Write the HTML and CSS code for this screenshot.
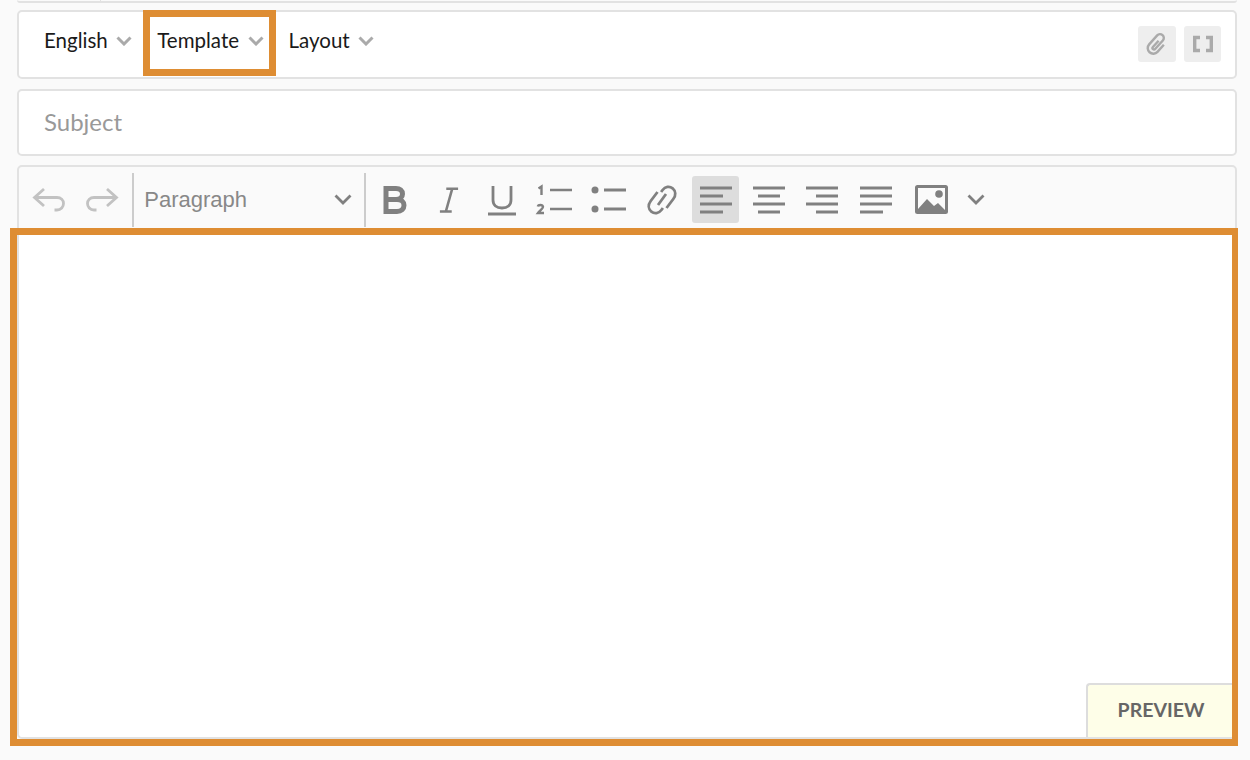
FILE: index.html
```html
<!DOCTYPE html>
<html lang="en">
<head>
<meta charset="utf-8">
<title>Email composer</title>
<link rel="stylesheet" href="styles.css">
</head>
<body>
<main class="composer">
  <div class="stub"><span class="stub-tab"></span></div>

  <section class="panel topbar">
    <div class="menu">
      <div class="menu-item"><span>English</span><svg class="chev" viewBox="0 0 16 10"><path d="M1.500 1.500 8 8l6.500-6.500"/></svg></div>
      <div class="menu-item"><span>Template</span><svg class="chev" viewBox="0 0 16 10"><path d="M1.500 1.500 8 8l6.500-6.500"/></svg><div class="mark mark-template"></div></div>
      <div class="menu-item"><span>Layout</span><svg class="chev" viewBox="0 0 16 10"><path d="M1.500 1.500 8 8l6.500-6.500"/></svg></div>
    </div>
    <div class="top-actions">
      <button class="square attach"><svg viewBox="0 0 24 24"><path transform="rotate(42 12 12)" d="M11 8.500v8.500a1.500 1.500 0 0 0 3 0V5.500a3.800 3.800 0 0 0-7.600 0v12a5.600 5.600 0 0 0 11.200 0V8"/></svg></button>
      <button class="square full"><svg viewBox="0 0 24 24"><path d="M9 5.500H3.700v13H9M15 5.500h5.300v13H15"/></svg></button>
    </div>
  </section>

  <section class="panel subject">Subject</section>

  <section class="panel editor">
    <div class="toolbar">
      <button class="tool muted"><svg viewBox="0 0 32 24"><path d="M11 1 1.500 9.500 11 18M1.500 9.500H24c4 0 6.500 2.600 6.500 6s-2.500 6.500-6.500 6.500h-2.500"/></svg></button>
      <button class="tool muted"><svg viewBox="0 0 32 24"><path d="M21 1l9.500 8.500L21 18M30.500 9.500H8c-4 0-6.500 2.600-6.500 6S4 22 8 22h2.500"/></svg></button>
      <div class="select"><span>Paragraph</span><svg class="chev-dark" viewBox="0 0 18 11"><path d="M1.500 1.500 9 9l7.500-7.500"/></svg></div>
      <button class="tool"><svg viewBox="0 0 24 28"><path class="thick" d="M3 2.500h10c4 0 6.500 2 6.500 5.500S17 13.500 13 13.500H3zM3 13.500h11c4.500 0 7 2.300 7 5.800S18.500 25.500 14 25.500H3z"/></svg></button>
      <button class="tool"><svg viewBox="0 0 22 28"><path d="M8 2h13M1 27h13M14.500 2 7.500 27"/></svg></button>
      <button class="tool"><svg viewBox="0 0 28 30"><path d="M5 1v14c0 5 3.500 8 9 8s9-3 9-8V1M0 29h28"/></svg></button>
      <button class="tool"><svg viewBox="0 0 36 30"><path class="num" d="M1.500 3.500 4.500 1.500V10M13 5h22M13 24h22"/><path class="num" d="M.8 21.500c.5-2 4.800-2.300 5.200.3.200 1.500-3.200 3.800-5 6.200h6"/></svg></button>
      <button class="tool"><svg viewBox="0 0 36 30"><circle class="solid" cx="4" cy="5" r="3.500"/><circle class="solid" cx="4" cy="24" r="3.500"/><path d="M13 5h22M13 24h22"/></svg></button>
      <button class="tool"><svg viewBox="0 0 30 32"><path d="M10.500 8 3.700 17c-2.800 3.700-2.500 8 .7 10.700 3.100 2.500 7.400 1.800 10-1.700l1.500-2M19.500 24l6.800-9c2.800-3.700 2.500-8-.7-10.700-3.100-2.500-7.400-1.800-10 1.700l-1.500 2M11 21l8-11"/></svg></button>
      <button class="tool active"><svg viewBox="0 0 32 27"><path d="M0 2h32M0 10h23M0 18h32M0 26h23"/></svg></button>
      <button class="tool"><svg viewBox="0 0 32 27"><path d="M0 2h32M5 10h22M0 18h32M5 26h22"/></svg></button>
      <button class="tool"><svg viewBox="0 0 32 27"><path d="M0 2h32M10 10h22M0 18h32M10 26h22"/></svg></button>
      <button class="tool"><svg viewBox="0 0 32 27"><path d="M0 2h32M0 10h32M0 18h32M0 26h23"/></svg></button>
      <button class="tool image"><svg viewBox="0 0 33 29"><rect class="frame" x="1.500" y="1.500" width="30" height="26" rx="1"/><circle class="solid" cx="24" cy="9" r="3.800"/><path class="solid" d="M3 27v-3l9-10 7 7 4-3 7 7v2z"/></svg></button>
      <button class="tool narrow"><svg class="chev-dark" viewBox="0 0 18 11"><path d="M1.500 1.500 9 9l7.500-7.500"/></svg></button>
    </div>
    <div class="canvas">
      <div class="preview">PREVIEW</div>
    </div>
    <div class="mark mark-editor"></div>
  </section>
</main>
</body>
</html>
```

FILE: styles.css
```css
* { box-sizing: border-box; }

html, body {
  margin: 0;
  height: 760px;
  overflow: hidden;
  background: #fafafa;
}

body {
  font-family: Lato, "Liberation Sans", sans-serif;
}

.composer {
  display: flex;
  flex-direction: column;
  width: 1220px;
  margin-left: 17px;
}

.stub {
  height: 3px;
  margin-bottom: 7px;
  border-bottom: 2px solid #e2e2e2;
  border-radius: 0 0 4px 4px;
}

.stub-tab {
  display: block;
  width: 84px;
  height: 1px;
  border-right: 1px solid #e2e2e2;
}

.panel {
  position: relative;
  background: #fff;
  border: 2px solid #e2e2e2;
  border-radius: 5px;
}

.topbar {
  display: flex;
  justify-content: space-between;
  height: 69px;
  padding: 10px 14px 0 25px;
}

.menu {
  display: flex;
  gap: 25px;
  height: 36px;
}

.menu-item {
  position: relative;
  display: flex;
  align-items: center;
  gap: 8.500px;
  font-size: 20.500px;
  color: #1a1a1a;
}

.chev {
  width: 16px;
  height: 10px;
  margin-top: 2px;
  fill: none;
  stroke: #aaa;
  stroke-width: 3px;
}

.mark {
  position: absolute;
  border: 7px solid #de8d33;
  pointer-events: none;
}

.mark-template {
  top: -12px;
  right: -12px;
  bottom: -18px;
  left: -14px;
}

.top-actions {
  display: flex;
  gap: 8px;
  margin-top: 4px;
}

.square {
  display: flex;
  align-items: center;
  justify-content: center;
  height: 36px;
  padding: 0;
  border: 0;
  border-radius: 3px;
  background: #eee;
}

.attach { width: 38px; }
.full { width: 37px; }

.square svg {
  width: 24px;
  height: 24px;
  fill: none;
  stroke: #aaa;
  stroke-width: 2.400px;
}

.full svg { stroke-width: 3.400px; }

.subject {
  display: flex;
  align-items: center;
  height: 67px;
  margin-top: 10px;
  padding: 0 0 2px 25px;
  font-size: 24px;
  color: #999;
}

.editor {
  display: flex;
  flex-direction: column;
  height: 574px;
  margin-top: 9px;
  background: #fafafa;
}

.toolbar {
  display: flex;
  align-items: center;
  gap: 6.400px;
  height: 63px;
  flex: none;
  padding: 2px 0 0 6.500px;
}

.tool {
  display: flex;
  align-items: center;
  justify-content: center;
  flex: none;
  width: 47px;
  height: 47px;
  padding: 0;
  border: 0;
  border-radius: 3px;
  background: transparent;
}

.tool svg {
  display: block;
  height: auto;
  fill: none;
  stroke: #808080;
  stroke-width: 2.800px;
  overflow: visible;
}

.tool:nth-of-type(1) svg, .tool:nth-of-type(2) svg { width: 32px; }
.tool:nth-of-type(3) svg { width: 24px; }
.tool:nth-of-type(4) svg { width: 20px; }
.tool:nth-of-type(5) svg { width: 28px; }
.tool:nth-of-type(6) svg { width: 36px; }
.tool:nth-of-type(7) svg { width: 36px; }
.tool:nth-of-type(8) svg { width: 30px; }
.tool:nth-of-type(n+9):nth-of-type(-n+12) svg { width: 32px; }
.tool:nth-of-type(13) svg { width: 33px; }

.tool.muted svg { stroke: #c2c2c2; }
.tool.active { background: #ddd; }
.tool.image { margin-left: 2px; }
.tool.narrow { width: 28px; margin-left: 1px; }
.tool.narrow svg.chev-dark { width: 18px; }

.thick { stroke-width: 5px; }
.num { stroke-width: 2.400px; }
.tool svg .solid { fill: #808080; stroke: none; }
.frame { stroke-width: 3px; }

.select {
  display: flex;
  align-items: center;
  justify-content: space-between;
  flex: none;
  width: 234px;
  height: 54px;
  margin-right: -1px;
  padding: 0 12px 0 10px;
  border: solid #ccc;
  border-width: 0 2px;
  font-family: "Liberation Sans", Arial, sans-serif;
  font-size: 22px;
  color: #888;
}

.chev-dark {
  width: 18px;
  height: 11px;
  fill: none;
  stroke: #808080;
  stroke-width: 2.800px;
}

.canvas {
  position: relative;
  flex: 1;
  background: #fff;
  border-radius: 0 0 4px 4px;
}

.preview {
  position: absolute;
  right: 0;
  bottom: 0;
  display: flex;
  align-items: center;
  justify-content: center;
  width: 149px;
  height: 54px;
  padding: 0 1px 3px 0;
  background: #fefee8;
  border: solid #ddd;
  border-width: 2px 0 0 2px;
  border-top-left-radius: 4px;
  font-size: 19.500px;
  font-weight: 700;
  color: #666;
}

.mark-editor {
  top: 61px;
  right: -3px;
  bottom: -9px;
  left: -9px;
  border-right-width: 6px;
}
```
